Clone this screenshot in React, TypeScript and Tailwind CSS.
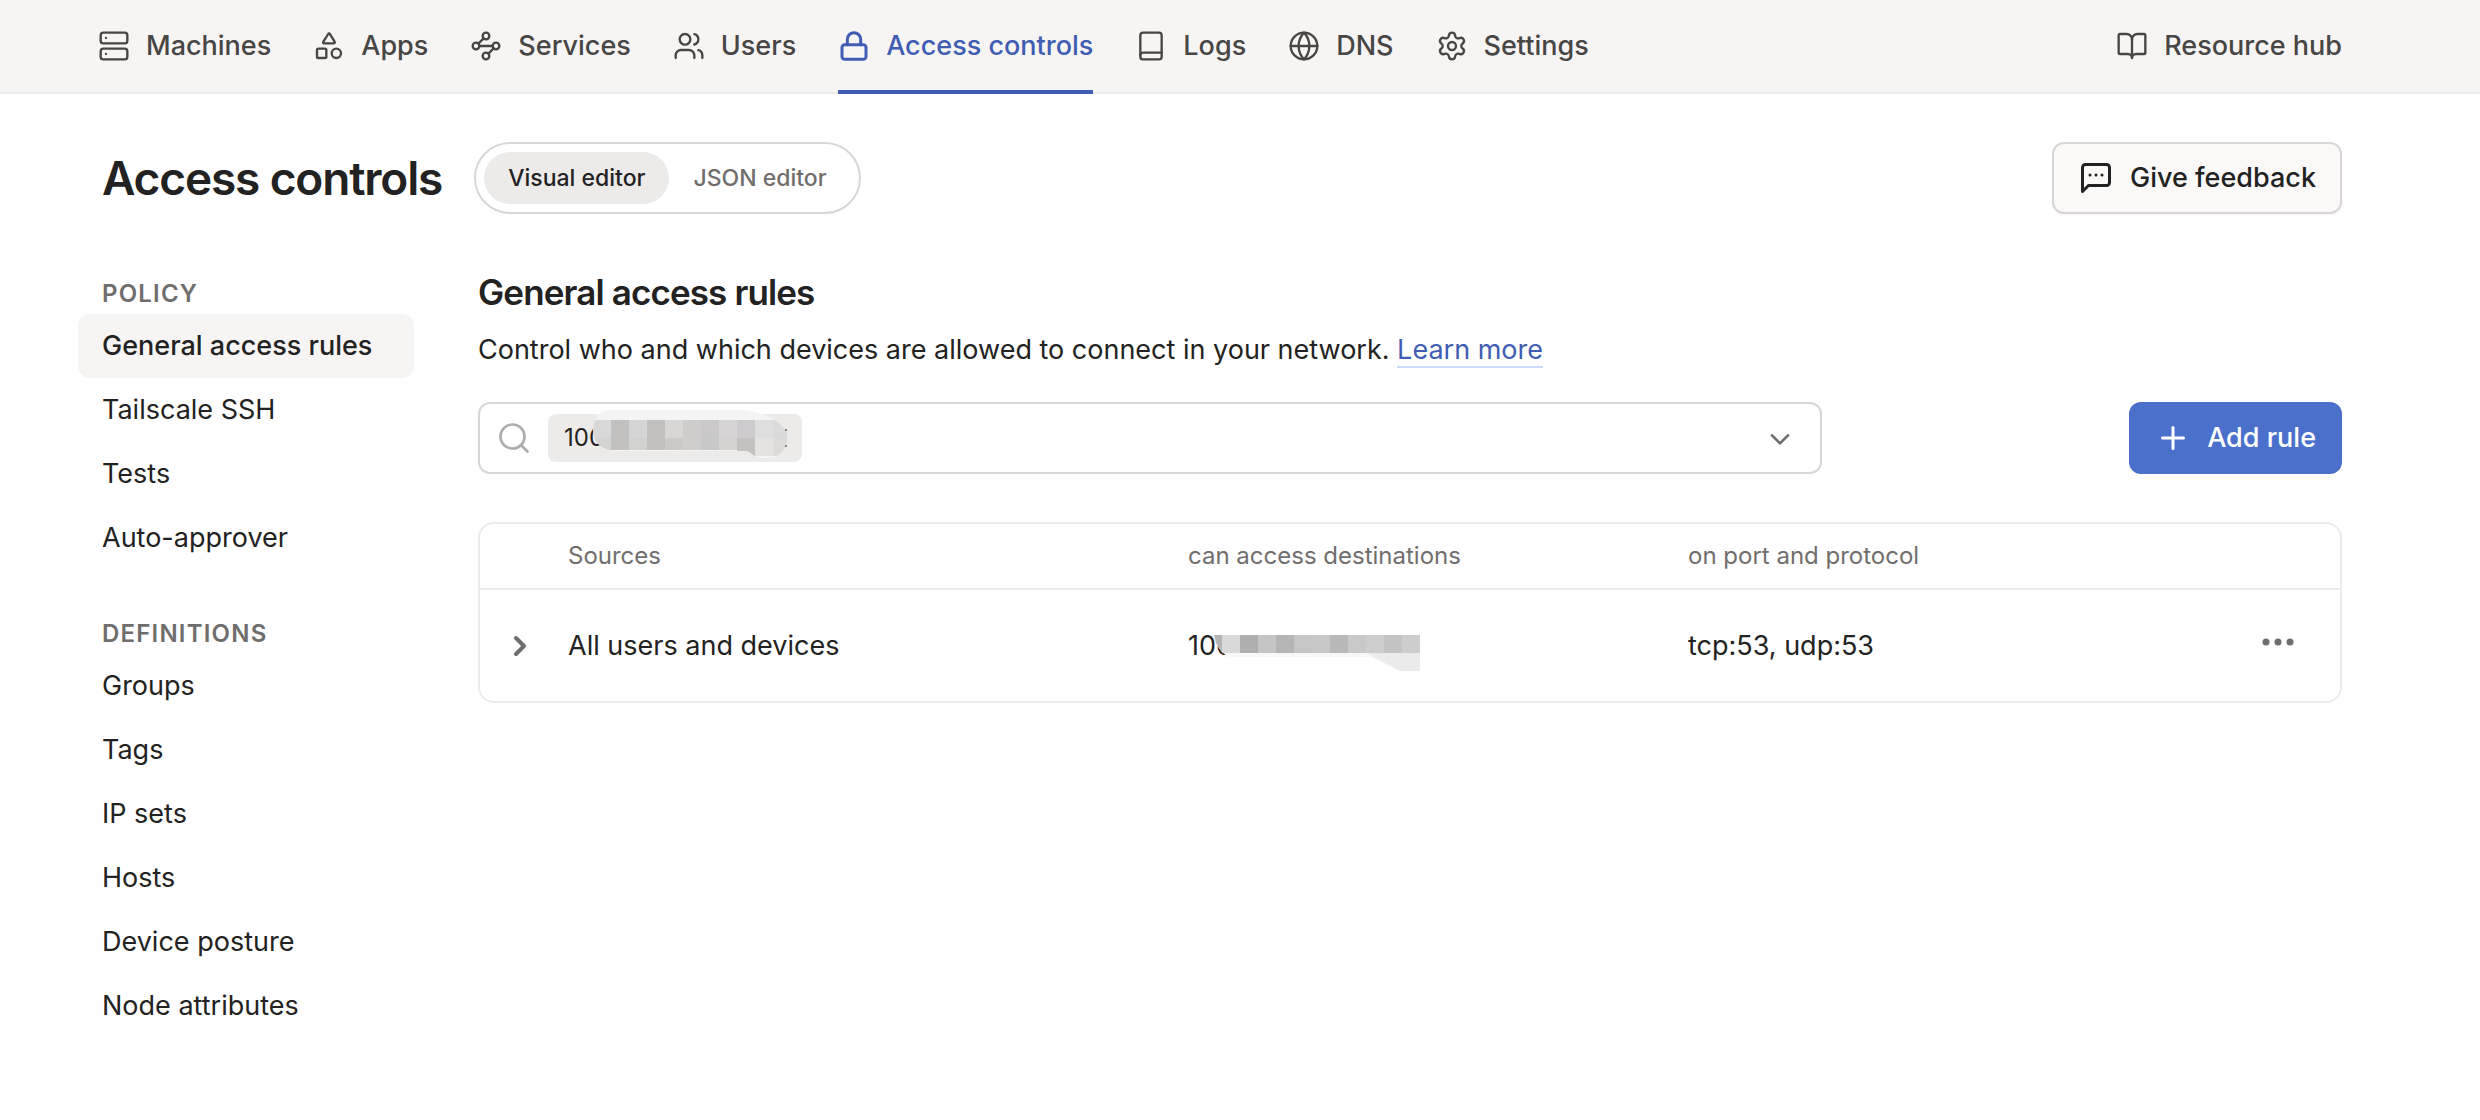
import { BookOpen, Globe, Lock, Plus, Search, Server, Settings, Shapes, Users, Waypoints } from "lucide-react";
import type { ComponentType, ReactNode, SVGProps } from "react";

type IconType = ComponentType<SVGProps<SVGSVGElement>>;

const navItems: { label: string; icon: IconType; active?: boolean }[] = [
  { label: "Machines", icon: Server },
  { label: "Apps", icon: Shapes },
  { label: "Services", icon: Waypoints },
  { label: "Users", icon: Users },
  { label: "Access controls", icon: Lock, active: true },
  { label: "Logs", icon: LogBook },
  { label: "DNS", icon: Globe },
  { label: "Settings", icon: Settings },
];

const sections = [
  { title: "Policy", items: ["General access rules", "Tailscale SSH", "Tests", "Auto-approver"] },
  { title: "Definitions", items: ["Groups", "Tags", "IP sets", "Hosts", "Device posture", "Node attributes"] },
];

export default function App() {
  return (
    <div className="min-h-screen bg-white font-[Inter,sans-serif] text-[27px] leading-10 text-[#232222]">
      <TopNav />
      <main className="pt-12 pr-[138px] pb-16 pl-[102px]">
        <div className="flex items-center gap-8">
          <h1 className="text-[46px] font-semibold tracking-tight">Access controls</h1>
          <div className="flex rounded-full border-2 border-[#dad6d5] p-2 text-[23px] leading-[52px] font-medium">
            <button type="button" aria-pressed="true" className="rounded-full bg-[#edebea] px-6">
              Visual editor
            </button>
            <button type="button" aria-pressed="false" className="rounded-full px-6 text-[#706e6d]">
              JSON editor
            </button>
          </div>
          <button
            type="button"
            className="ml-auto flex h-[72px] items-center gap-4 rounded-xl border-2 border-[#dad6d5] bg-[#faf9f8] px-6 font-medium shadow-xs"
          >
            <MessageIcon className="size-9" />
            Give feedback
          </button>
        </div>
        <div className="mt-16 flex gap-16">
          <Sidebar />
          <section className="min-w-0 flex-1">
            <h2 className="text-[35px] leading-7 font-semibold tracking-tight">General access rules</h2>
            <p className="mt-6">
              Control who and which devices are allowed to connect in your network.{" "}
              <a href="#learn-more" className="border-b-2 border-[#cbdcff] text-[#3f5db3]">
                Learn more
              </a>
            </p>
            <div className="mt-8 flex items-center justify-between gap-8">
              <RuleFilter />
              <button
                type="button"
                className="flex h-[72px] shrink-0 items-center gap-4 rounded-xl bg-[#4b70cc] px-[26px] font-medium text-white"
              >
                <Plus aria-hidden="true" className="size-9" />
                Add rule
              </button>
            </div>
            <RulesTable />
          </section>
        </div>
      </main>
    </div>
  );
}

function TopNav() {
  return (
    <header className="flex justify-between border-b-2 border-[#edebea] bg-[#f7f5f4] pr-[138px] pl-[98px] font-medium text-[#474645]">
      <nav className="flex gap-[42px]">
        {navItems.map(({ label, icon: Icon, active }) => (
          <a
            key={label}
            href={`#${label.toLowerCase().replace(" ", "-")}`}
            aria-current={active ? "page" : undefined}
            className={`-mb-0.5 flex h-[94px] items-center gap-4 border-b-4 pt-0.5 ${
              active ? "border-[#3f5db3] text-[#3f5db3]" : "border-transparent"
            }`}
          >
            <Icon aria-hidden="true" className="size-8" strokeWidth={active ? 2.25 : 1.75} />
            {label}
          </a>
        ))}
      </nav>
      <a href="#resource-hub" className="flex items-center gap-4">
        <BookOpen aria-hidden="true" className="size-8" strokeWidth={1.75} />
        Resource hub
      </a>
    </header>
  );
}

function Sidebar() {
  return (
    <aside className="-ml-6 flex w-[336px] shrink-0 flex-col gap-12">
      {sections.map(({ title, items }) => (
        <nav key={title} aria-label={title}>
          <h3 className="mb-1 px-6 text-2xl leading-8 font-semibold tracking-wider text-[#706e6d] uppercase">{title}</h3>
          <ul>
            {items.map((item) => (
              <li key={item}>
                <a
                  href={`#${item.toLowerCase().replace(/ /g, "-")}`}
                  className={`block rounded-xl px-6 leading-[64px] ${
                    item === "General access rules" ? "bg-[#f7f5f4] font-medium" : ""
                  }`}
                >
                  {item}
                </a>
              </li>
            ))}
          </ul>
        </nav>
      ))}
    </aside>
  );
}

function RuleFilter() {
  return (
    <div className="flex h-[72px] max-w-[1344px] flex-1 items-center gap-4 rounded-xl border-2 border-[#dad6d5] pr-6 pl-4">
      <Search aria-hidden="true" className="size-9 shrink-0 text-[#afacab]" strokeWidth={1.75} />
      <span className="relative h-12 w-[254px] shrink-0 rounded-lg bg-[#edebea] px-4 text-2xl leading-[48px]">
        100
        <ChipMask />
      </span>
      <input type="text" aria-label="Filter rules" className="min-w-0 flex-1 outline-none" />
      <button type="button" aria-label="Show filters">
        <Icon className="size-8 text-[#706e6d]">
          <path d="m6 10 6 6 6-6" />
        </Icon>
      </button>
    </div>
  );
}

function RulesTable() {
  return (
    <div className="mt-12 rounded-2xl border-2 border-[#ebebeb]">
      <table className="w-full table-fixed text-left">
        <thead className="text-2xl text-[#706e6d]">
          <tr className="h-[65px] border-b-2 border-[#ebebeb]">
            <th className="w-[88px]" aria-label="Expand" />
            <th className="w-1/3 font-normal">Sources</th>
            <th className="w-[500px] font-normal">can access destinations</th>
            <th className="font-normal">on port and protocol</th>
            <th className="w-24" aria-label="Actions" />
          </tr>
        </thead>
        <tbody>
          <tr className="h-28">
            <td className="pl-6">
              <button type="button" aria-label="Expand rule" className="block">
                <Icon className="size-8 text-[#706e6d]" strokeWidth={3}>
                  <path d="m9 18 6-6-6-6" />
                </Icon>
              </button>
            </td>
            <td>All users and devices</td>
            <td>
              <span className="relative block">
                100
                <AddressMask />
              </span>
            </td>
            <td>tcp:53, udp:53</td>
            <td>
              <button type="button" aria-label="Rule actions" className="mb-2 ml-4 block">
                <svg viewBox="0 0 36 36" fill="currentColor" className="size-9 text-[#706e6d]">
                  <circle cx="6" cy="18" r="3.5" />
                  <circle cx="18" cy="18" r="3.5" />
                  <circle cx="30" cy="18" r="3.5" />
                </svg>
              </button>
            </td>
          </tr>
        </tbody>
      </table>
    </div>
  );
}

const chipTop = ["#d8d8d8", "#c2c1c0", "#d6d5d5", "#c2c1c0", "#d8d7d6", "#cfcdcc", "#cac8c8", "#d6d4d5", "#cdcbce", "#dedede", "#dadada"];
const chipBottom = ["#d3d3d2", "#c2c1c0", "#d2d2d1", "#c1c0bf", "#cbcac9", "#cfcecd", "#c9c8c8", "#d4d3d2", "#c3c2c1", "#e4e3e2", "#dcdbda"];

// Pixelated blocks over the hidden part of the address
function ChipMask() {
  return (
    <svg aria-hidden="true" viewBox="0 0 254 52" shapeRendering="crispEdges" className="absolute -top-1 left-0 h-[52px] w-[254px]">
      <clipPath id="chip-mask">
        <path d="M45 20C46 8 52 0 62 0H194C212 1 236 12 239 24C241 34 234 48 222 48H214C206 48 204 42 198 41H70C54 41 45 32 45 20Z" />
      </clipPath>
      <g clipPath="url(#chip-mask)">
        <rect width="254" height="52" fill="#f4f4f4" />
        {chipTop.map((fill, i) => (
          <rect key={i} x={45 + i * 18} y="10" width="18" height="18" fill={fill} />
        ))}
        {chipBottom.map((fill, i) => (
          <rect key={i} x={45 + i * 18} y="28" width="18" height={i > 7 ? 18 : 12} fill={fill} />
        ))}
      </g>
      <rect x="237" y="19" width="2" height="2" fill="#858483" />
      <rect x="237" y="35" width="2" height="2" fill="#858483" />
    </svg>
  );
}

const addressCells = ["#d9d9d9", "#afafaf", "#c5c5c5", "#b5b5b5", "#c6c6c6", "#c8c8c8", "#b9b9b9", "#c9c9c9", "#cecece", "#c4c4c4", "#cdcdcd"];

function AddressMask() {
  return (
    <svg aria-hidden="true" viewBox="0 0 232 40" className="absolute top-2 left-0 h-10 w-[232px]">
      <path d="M26 1H232V37H212L182 23H40L33 17L27 8Z" fill="#f8f8f8" />
      <path d="M178 19H232V37H212L184 22Z" fill="#ebebeb" />
      <path d="M26 1H34V18L28 9Z" fill="#b4b4b4" />
      {addressCells.map((fill, i) => (
        <rect key={i} x={34 + i * 18} y="1" width="18" height="18" fill={fill} />
      ))}
    </svg>
  );
}

function Icon({ children, ...props }: SVGProps<SVGSVGElement> & { children?: ReactNode }) {
  return (
    <svg
      aria-hidden="true"
      viewBox="0 0 24 24"
      fill="none"
      stroke="currentColor"
      strokeWidth={2}
      strokeLinecap="round"
      strokeLinejoin="round"
      {...props}
    >
      {children}
    </svg>
  );
}

function LogBook(props: SVGProps<SVGSVGElement>) {
  return (
    <Icon {...props}>
      <rect x="4" y="2" width="16" height="20" rx="2" />
      <path d="M4 19a2 2 0 0 1 2-2h14" />
    </Icon>
  );
}

function MessageIcon(props: SVGProps<SVGSVGElement>) {
  return (
    <Icon {...props}>
      <path d="M21 15a2 2 0 0 1-2 2H7l-4 4V5a2 2 0 0 1 2-2h14a2 2 0 0 1 2 2z" />
      <path d="M8 10h.01M12 10h.01M16 10h.01" />
    </Icon>
  );
}
